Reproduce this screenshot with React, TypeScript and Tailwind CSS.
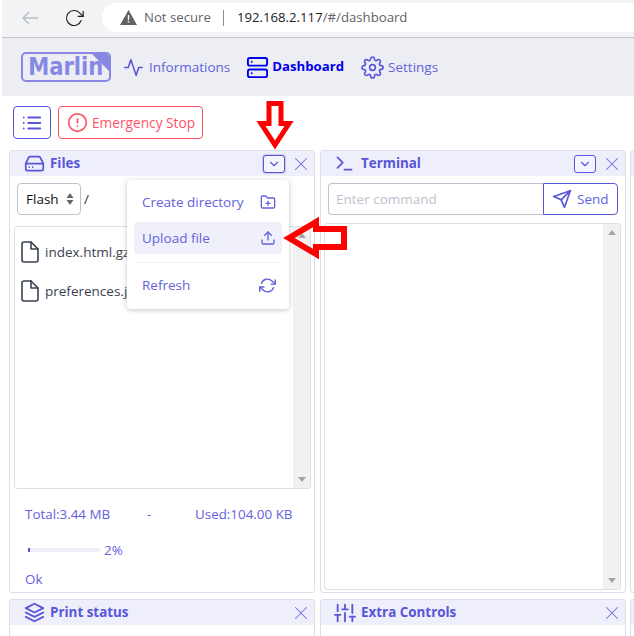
import {
  FiActivity,
  FiAlertCircle,
  FiChevronDown,
  FiFile,
  FiFolderPlus,
  FiHardDrive,
  FiLayers,
  FiList,
  FiRefreshCw,
  FiRotateCw,
  FiSend,
  FiServer,
  FiSettings,
  FiSliders,
  FiTerminal,
  FiUpload,
  FiX,
} from 'react-icons/fi';
import { ReactNode } from 'react';

function PanelHeader({
  icon,
  title,
  menu,
  focused,
  titleGap,
}: {
  icon: ReactNode;
  title: string;
  menu?: boolean;
  focused?: boolean;
  titleGap: string;
}) {
  return (
    <div className="flex h-[25px] items-center bg-[#eeeffa] text-[#5755d9]">
      <div className={`flex items-center ${titleGap}`}>
        {icon}
        <span className="pb-[1px] text-[13.4px] font-bold">{title}</span>
      </div>
      {menu && (
        <button
          className={`ml-auto flex h-[18px] w-[22px] items-center justify-center rounded-[3px] border border-[#5755d9] bg-[#f4f4fc] ${focused ? 'shadow-[0_0_0_1px_rgba(87,85,217,0.25)]' : ''}`}
        >
          <FiChevronDown className="h-[14px] w-[14px]" />
        </button>
      )}
      <button className={`${menu ? 'ml-[5px]' : 'ml-auto'} mr-[2px] flex w-[22px] justify-center text-[#6f6ee0]`}>
        <FiX className="h-[22px] w-[22px]" strokeWidth={1.1} />
      </button>
    </div>
  );
}

function Scrollbar() {
  return (
    <div className="flex w-[17px] flex-col items-center justify-between bg-[#f1f1f1] py-[6px]">
      <div className="h-0 w-0 border-x-[4px] border-b-[5px] border-x-transparent border-b-[#a3a3a3]" />
      <div className="h-0 w-0 border-x-[4px] border-t-[5px] border-x-transparent border-t-[#a3a3a3]" />
    </div>
  );
}

function MenuItem({ label, icon, active }: { label: string; icon: ReactNode; active?: boolean }) {
  return (
    <div
      className={`flex h-[32px] items-center justify-between rounded-[3px] pl-[8px] pr-[6px] ${active ? 'bg-[#f0f0fa]' : ''}`}
    >
      <span>{label}</span>
      {icon}
    </div>
  );
}

export default function App() {
  return (
    <div
      className="relative h-[636px] w-[634px] overflow-hidden bg-white text-[13.5px] text-[#5755d9]"
      style={{ fontFamily: '"Open Sans", "Noto Sans", sans-serif' }}
    >
      {/* browser chrome */}
      <div className="ml-[2px] flex h-[38px] items-center border-b border-[#c4c6ca] bg-[#f1f3f4] pb-[2px] pl-[20px]">
        <svg width="16" height="14" viewBox="0 0 16 14" fill="none" stroke="#b9bcc0" strokeWidth="1.3">
          <path d="M16 7H1M7 1L1 7l6 6" />
        </svg>
        <FiRotateCw className="ml-[26px] h-[20px] w-[20px] text-[#1f1f1f]" strokeWidth={1.4} />
        <div className="ml-[18px] flex h-[29px] flex-1 items-center rounded-l-full bg-white pl-[18px] text-[13.2px] text-[#5f6368]">
          <svg width="17" height="15" viewBox="0 0 17 15" fill="#5f6368">
            <path d="M8.500 0L17 15H0z" />
            <path d="M7.800 5h1.400v5H7.800zM7.800 11h1.400v1.500H7.800z" fill="#fff" />
          </svg>
          <span className="ml-[7px]">Not secure</span>
          <span className="ml-[12px] h-[16px] w-px bg-[#8a8d91]" />
          <span className="ml-[13px]">
            <span className="text-[#202124]">192.168.2.117</span>/#/dashboard
          </span>
        </div>
      </div>

      {/* navbar */}
      <div className="ml-[2px] flex h-[58px] items-center bg-[#eceef4] pl-[19px]">
        <div className="relative flex h-[30px] w-[90px] items-center justify-center overflow-hidden rounded-[5px] border-2 border-[#8888e4] text-[#8888e4]">
          <span
            className="inline-block scale-x-[0.88] text-[24px] font-bold leading-none"
            style={{ fontFamily: '"DejaVu Sans", sans-serif' }}
          >
            Marlin
          </span>
          <div className="absolute -right-[12px] -top-[12px] h-[24px] w-[24px] rotate-45 bg-[#8888e4]" />
        </div>
        <FiActivity className="ml-[12px] h-[21px] w-[21px]" strokeWidth={1.8} />
        <span className="ml-[5px] text-[#6461dc]">Informations</span>
        <FiServer className="ml-[16px] h-[23px] w-[23px] text-[#0000f0]" strokeWidth={2} />
        <span className="ml-[3px] text-[13.2px] font-bold text-[#0000f0]">Dashboard</span>
        <FiSettings className="ml-[17px] h-[23px] w-[23px]" strokeWidth={1.7} />
        <span className="ml-[4px] text-[#6461dc]">Settings</span>
      </div>

      {/* toolbar */}
      <div className="flex gap-[7px] pl-[13px] pt-[10px]">
        <button className="flex h-[33px] w-[38px] items-center justify-center rounded-[4px] border border-[#5755d9]">
          <FiList className="h-[22px] w-[22px]" />
        </button>
        <button className="flex h-[33px] w-[145px] items-center gap-[4px] rounded-[4px] border border-[#ff4d62] pl-[8px] text-[#ff5468]">
          <FiAlertCircle className="h-[21px] w-[21px]" />
          <span className="pt-[1px] text-[13.7px]">Emergency Stop</span>
        </button>
      </div>

      {/* panels */}
      <div className="grid grid-cols-[306px_306px_100px] grid-rows-[443px_60px] gap-x-[5px] gap-y-[6px] pl-[9px] pt-[11px]">
        <section className="flex flex-col overflow-hidden rounded-[3px] border border-[#dcdee8]">
          <PanelHeader
            title="Files"
            menu
            focused
            titleGap="gap-[5px] pl-[14px]"
            icon={<FiHardDrive className="h-[21px] w-[21px]" />}
          />
          <div className="flex items-center pl-[7px] pt-[7px]">
            <div className="flex h-[32px] w-[64px] items-center justify-between rounded-[4px] border border-[#bcc3ce] pl-[8px] pr-[6px] text-[#111]">
              <span>Flash</span>
              <svg width="8" height="12" viewBox="0 0 8 12" fill="#666">
                <path d="M4 0l3.500 5h-7zM4 12L.5 7h7z" />
              </svg>
            </div>
            <span className="ml-[3px] text-[#333]">/</span>
          </div>
          <div className="ml-[4px] mr-[3px] mt-[11px] flex h-[263px] overflow-hidden rounded-[3px] border border-[#dcdee8]">
            <div className="flex-1 pl-[3px] pt-[5px] text-[#3b4351]">
              <div className="flex h-[39px] items-center gap-[3px]">
                <FiFile className="h-[24px] w-[24px]" strokeWidth={1.6} />
                <span className="pt-[1px]">index.html.gz</span>
              </div>
              <div className="flex h-[39px] items-center gap-[3px]">
                <FiFile className="h-[24px] w-[24px]" strokeWidth={1.6} />
                <span className="pt-[1px]">preferences.json</span>
              </div>
            </div>
            <Scrollbar />
          </div>
          <div className="mt-[15px] flex h-[20px] items-center pl-[15px] text-[13.4px] text-[#6461dc]">
            <span className="w-[122px]">Total:3.44 MB</span>
            <span className="w-[48px]">-</span>
            <span>Used:104.00 KB</span>
          </div>
          <div className="mt-[16px] flex h-[20px] items-center pl-[18px] text-[13.4px] text-[#6461dc]">
            <div className="h-[4px] w-[72px] rounded-full bg-[#eeeff4]">
              <div className="h-[4px] w-[2px] bg-[#5755d9]" />
            </div>
            <span className="ml-[4px]">2%</span>
          </div>
          <div className="mt-[9px] pl-[15px] text-[13.4px] leading-[20px] text-[#6461dc]">Ok</div>
        </section>

        <section className="flex flex-col overflow-hidden rounded-[3px] border border-[#dcdee8]">
          <PanelHeader
            title="Terminal"
            menu
            titleGap="gap-[6px] pl-[13px]"
            icon={<FiTerminal className="h-[21px] w-[21px]" />}
          />
          <div className="flex pl-[7px] pr-[7px] pt-[7px]">
            <div className="flex h-[32px] flex-1 items-center rounded-l-[4px] border border-r-0 border-[#bcc3ce] pl-[7px] pt-[1px] text-[#bcc3ce]">
              Enter command
            </div>
            <button className="flex h-[32px] w-[75px] items-center gap-[5px] rounded-r-[4px] border border-[#5755d9] pl-[8px]">
              <FiSend className="h-[20px] w-[20px]" />
              <span className="text-[#6461dc]">Send</span>
            </button>
          </div>
          <div className="ml-[3px] mr-[4px] mt-[8px] flex h-[367px] overflow-hidden rounded-[3px] border border-[#dcdee8]">
            <div className="flex-1" />
            <Scrollbar />
          </div>
        </section>

        <section className="-ml-px rounded-[3px] border border-[#dcdee8]">
          <div className="h-[25px] bg-[#eeeffa]" />
        </section>

        <section className="overflow-hidden rounded-[3px] border border-[#dcdee8]">
          <PanelHeader
            title="Print status"
            titleGap="gap-[5px] pl-[14px]"
            icon={<FiLayers className="h-[21px] w-[21px]" />}
          />
        </section>
        <section className="overflow-hidden rounded-[3px] border border-[#dcdee8]">
          <PanelHeader
            title="Extra Controls"
            titleGap="gap-[5px] pl-[13px]"
            icon={<FiSliders className="h-[22px] w-[22px]" />}
          />
        </section>
        <section className="-ml-px rounded-[3px] border border-[#dcdee8]">
          <div className="h-[25px] bg-[#eeeffa]" />
        </section>
      </div>

      {/* open dropdown */}
      <div className="absolute left-[127px] top-[180px] h-[129px] w-[162px] rounded-[4px] bg-white px-[7px] pt-[6px] text-[#6461dc] shadow-[0_1px_5px_rgba(48,55,66,0.3)]">
        <MenuItem label="Create directory" icon={<FiFolderPlus className="h-[16px] w-[16px]" />} />
        <div className="mt-[4px]">
          <MenuItem label="Upload file" active icon={<FiUpload className="h-[16px] w-[16px]" />} />
        </div>
        <div className="mt-[8px] h-px bg-[#f1f1f5]" />
        <div className="mt-[6px]">
          <MenuItem label="Refresh" icon={<FiRefreshCw className="h-[17px] w-[17px]" />} />
        </div>
      </div>

      {/* red callout arrows */}
      <svg className="absolute left-[255px] top-[100px]" width="40" height="52" viewBox="0 0 40 52">
        <path d="M14 3.500h12v20h8L20 45 6 23.500h8z" fill="none" stroke="#f00" strokeWidth="5" />
      </svg>
      <svg className="absolute left-[282px] top-[216px]" width="68" height="44" viewBox="0 0 68 44">
        <path d="M62 13H34V6L7 22l27 16V31H62z" fill="none" stroke="#f00" strokeWidth="6" />
      </svg>
    </div>
  );
}
